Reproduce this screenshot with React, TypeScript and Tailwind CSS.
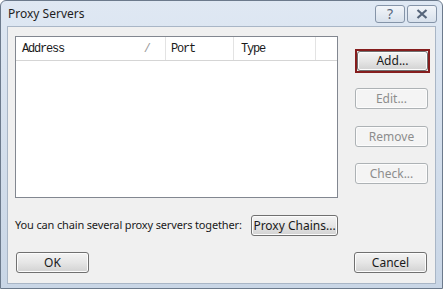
import React from 'react';

const ui = { fontFamily: '"Noto Sans", "Open Sans", Arial, sans-serif' };
const mono = { fontFamily: '"Liberation Mono", "DejaVu Sans Mono", monospace' };

function WinButton({
  label,
  disabled,
  focused,
  className = '',
}: {
  label: string;
  disabled?: boolean;
  focused?: boolean;
  className?: string;
}) {
  const base = disabled
    ? 'border border-[#adb2b5] bg-[#f4f4f4] text-[#8d8d8d]'
    : 'border border-[#707070] bg-gradient-to-b from-[#f4f4f4] via-[#e6e6e6] to-[#d2d2d2] text-[#1a1a1a]';
  const inner = (
    <div
      className={`flex items-center justify-center rounded-[3px] text-[12px] leading-none whitespace-nowrap shadow-[inset_0_0_0_1px_#fcfcfc] ${base} ${focused ? 'h-full w-full' : className}`}
      style={ui}
    >
      {label}
    </div>
  );
  if (focused) {
    return <div className={`border-2 border-[#851d1d] ${className}`}>{inner}</div>;
  }
  return inner;
}

export default function App() {
  return (
    <div className="w-[443px] h-[289px] overflow-hidden bg-white">
      <div className="w-[443px] h-[289px] flex flex-col rounded-t-[6px] border border-[#6c7a8c] bg-gradient-to-b from-[#dfe8f3] to-[#c9d6e6]">
        {/* title bar */}
        <div className="h-[25px] shrink-0 flex items-start justify-between pl-[7px] pr-[5px]">
          <span className="text-[12px] text-[#1e1e1e] mt-[4px]" style={ui}>
            Proxy Servers
          </span>
          <div className="flex gap-[2px] mt-[4px]">
            <div className="w-[30px] h-[18px] rounded-[3px] border border-[#8594a8] bg-gradient-to-b from-[#f2f5f9] to-[#d8e1ec] flex items-center justify-center text-[14px] leading-none text-[#56657a]" style={ui}>
              ?
            </div>
            <div className="w-[30px] h-[18px] rounded-[3px] border border-[#8594a8] bg-gradient-to-b from-[#f2f5f9] to-[#d8e1ec] flex items-center justify-center">
              <svg width="12" height="10" viewBox="0 0 12 10">
                <path d="M1.5 1 L10.5 9 M10.5 1 L1.5 9" stroke="#56657a" strokeWidth="2.2" />
              </svg>
            </div>
          </div>
        </div>

        {/* client area */}
        <div className="mx-[6px] mb-[4px] h-[258px] shrink-0 bg-[#f0f0f0] border border-[#a9b6c6] flex flex-col pl-[7px]">
          <div className="flex">
            {/* list */}
            <div className="mt-[9px] w-[323px] h-[162px] border border-[#828790] bg-white">
              <div className="h-[24px] flex border-b border-[#d5d5d5] text-[12px] text-[#1a1a1a]" style={mono}>
                <div className="w-[150px] flex items-center justify-between pl-[6px] pr-[14px] border-r border-[#e3e3e3]">
                  <span className="tracking-[-1.2px]">Address</span>
                  <span className="text-[#9a9a9a]">/</span>
                </div>
                <div className="w-[68px] flex items-center pl-[5px] border-r border-[#e3e3e3]">
                  <span className="tracking-[-1.2px]">Port</span>
                </div>
                <div className="w-[82px] flex items-center pl-[7px] border-r border-[#e3e3e3]">
                  <span className="tracking-[-1.2px]">Type</span>
                </div>
                <div className="flex-1" />
              </div>
            </div>
            {/* side buttons */}
            <div className="ml-[17px] flex flex-col pt-[22px]">
              <WinButton label="Add..." focused className="w-[75px] h-[24px]" />
              <WinButton label="Edit..." disabled className="mt-[15px] w-[73px] h-[21px]" />
              <WinButton label="Remove" disabled className="mt-[17px] w-[73px] h-[21px]" />
              <WinButton label="Check..." disabled className="mt-[16px] w-[73px] h-[21px]" />
            </div>
          </div>

          {/* chain row */}
          <div className="mt-[17px] flex items-center">
            <span className="w-[236px] whitespace-nowrap text-[11px] tracking-[-0.15px] text-[#1a1a1a]" style={ui}>
              You can chain several proxy servers together:
            </span>
            <WinButton label="Proxy Chains..." className="w-[87px] h-[21px]" />
          </div>

          {/* bottom buttons */}
          <div className="mt-[16px] flex justify-between pl-[1px] pr-[8px]">
            <WinButton label="OK" className="w-[73px] h-[21px]" />
            <WinButton label="Cancel" className="w-[73px] h-[21px]" />
          </div>
        </div>
      </div>
    </div>
  );
}
